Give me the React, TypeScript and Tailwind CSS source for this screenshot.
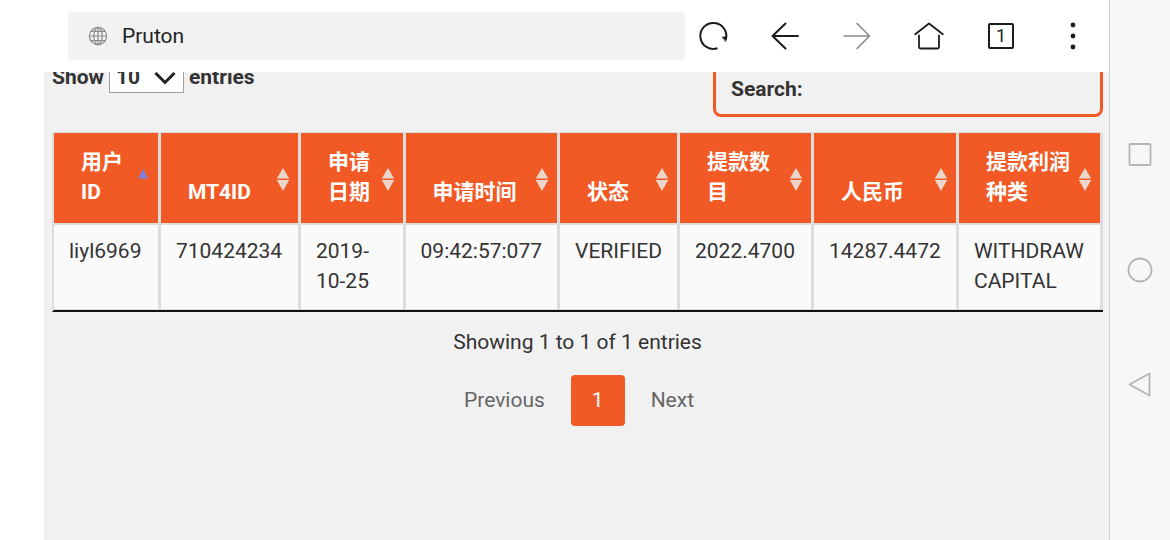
import { useState } from "react";
import type { ReactNode } from "react";

type SortState = "none" | "asc";

const COLUMNS: { label: string; width: string; sort: SortState }[] = [
  { label: "用户ID", width: "w-[107px]", sort: "asc" },
  { label: "MT4ID", width: "w-[140px]", sort: "none" },
  { label: "申请日期", width: "w-[105px]", sort: "none" },
  { label: "申请时间", width: "w-[154px]", sort: "none" },
  { label: "状态", width: "w-[120px]", sort: "none" },
  { label: "提款数目", width: "w-[134px]", sort: "none" },
  { label: "人民币", width: "w-[145px]", sort: "none" },
  { label: "提款利润种类", width: "w-[144px]", sort: "none" },
];

const ROWS = [
  [
    "liyl6969",
    "710424234",
    "2019-10-25",
    "09:42:57:077",
    "VERIFIED",
    "2022.4700",
    "14287.4472",
    "WITHDRAW CAPITAL",
  ],
];

/* ---------------- Browser bar ---------------- */

function BarButton({ label, children }: { label: string; children: ReactNode }) {
  return (
    <button
      type="button"
      aria-label={label}
      className="grid h-10 w-10 flex-shrink-0 place-items-center text-[#1c1c1c]"
    >
      {children}
    </button>
  );
}

function Icon({ children }: { children: ReactNode }) {
  return (
    <svg
      width="32"
      height="32"
      viewBox="0 0 32 32"
      fill="none"
      stroke="currentColor"
      strokeWidth="2"
      strokeLinecap="round"
      strokeLinejoin="round"
      aria-hidden="true"
    >
      {children}
    </svg>
  );
}

function BrowserBar() {
  return (
    <header className="flex h-[72px] items-center bg-white pl-[68px] pr-4">
      <label className="flex h-12 min-w-0 flex-1 items-center gap-3.5 rounded bg-[#f2f2f2] px-5">
        <svg
          width="20"
          height="20"
          viewBox="0 0 20 20"
          fill="none"
          stroke="#8c8c8c"
          strokeWidth="1.2"
          className="flex-shrink-0"
          aria-hidden="true"
        >
          <circle cx="10" cy="10" r="8.6" />
          <ellipse cx="10" cy="10" rx="4.2" ry="8.6" />
          <path d="M10 1.4v17.2M1.4 10h17.2M3 5.4h14M3 14.6h14" />
        </svg>
        <input
          type="text"
          aria-label="Address"
          defaultValue="Pruton"
          className="min-w-0 flex-1 bg-transparent leading-[30px] text-[#222] outline-none"
        />
      </label>

      <nav className="ml-2 flex gap-8">
        <BarButton label="Reload">
          <Icon>
            <path d="M20.5 28.2A13 13 0 1 1 28.8 19.5" strokeLinecap="butt" />
            <path d="M25.4 17.2L29.6 16.4L28.8 21.2Z" fill="currentColor" strokeWidth="0.6" />
          </Icon>
        </BarButton>
        <BarButton label="Back">
          <Icon>
            <path d="M29 16H3.5M16.5 3.5L3.5 16L16.5 28.5" />
          </Icon>
        </BarButton>
        <BarButton label="Forward">
          <span className="text-[#8c8c8c]">
            <Icon>
              <path d="M3 16h25.5M16 3.5L28.5 16L16 28.5" strokeWidth="1.6" />
            </Icon>
          </span>
        </BarButton>
        <BarButton label="Home">
          <Icon>
            <path d="M2.2 14.2L16 3.5L29.8 14.2" strokeWidth="1.8" />
            <path d="M6 15.5V27a1.5 1.5 0 0 0 1.5 1.5h17A1.5 1.5 0 0 0 26 27V15.5" strokeWidth="1.8" />
          </Icon>
        </BarButton>
        <BarButton label="Tabs">
          <span className="grid h-[26px] w-[26px] place-items-center rounded-xs border-2 border-[#1c1c1c] text-[18px] leading-none">
            1
          </span>
        </BarButton>
        <BarButton label="Menu">
          <svg width="6" height="28" viewBox="0 0 6 28" fill="currentColor" aria-hidden="true">
            <circle cx="3" cy="3" r="2.4" />
            <circle cx="3" cy="14" r="2.4" />
            <circle cx="3" cy="25" r="2.4" />
          </svg>
        </BarButton>
      </nav>
    </header>
  );
}

/* ---------------- Table controls ---------------- */

function TableControls() {
  const [query, setQuery] = useState("");

  return (
    <div className="flex items-start justify-between font-bold">
      <label className="flex h-8 items-center gap-[5px]">
        Show
        <span className="relative">
          <select
            defaultValue="10"
            className="block h-8 w-[75px] appearance-none border border-[#a0a0a0] bg-white pl-1.5 font-bold outline-none"
          >
            <option>10</option>
            <option>25</option>
            <option>50</option>
            <option>100</option>
          </select>
          <svg
            width="22"
            height="14"
            viewBox="0 0 22 14"
            fill="none"
            stroke="#222"
            strokeWidth="3"
            className="pointer-events-none absolute right-2 top-2.5"
            aria-hidden="true"
          >
            <path d="M1.5 2L11 11.5L20.5 2" />
          </svg>
        </span>
        entries
      </label>

      <label className="flex w-[390px] gap-2 rounded-lg border-3 border-[#ed5a26] px-[15px] py-2.5">
        Search:
        <input
          type="search"
          value={query}
          onChange={(e) => setQuery(e.target.value)}
          className="h-[30px] min-w-0 flex-1 bg-transparent font-normal outline-none"
        />
      </label>
    </div>
  );
}

/* ---------------- Table ---------------- */

function SortIcon({ sort }: { sort: SortState }) {
  return (
    <svg width="14" height="24" viewBox="0 0 14 24" className="flex-shrink-0 self-center" aria-hidden="true">
      {sort === "asc" ? (
        <path d="M7 2L12 11.5H2Z" fill="#8080e0" />
      ) : (
        <>
          <path d="M7 1L13.2 11.5H0.8Z" fill="#ecd6cc" />
          <path d="M7 24L13.2 13H0.8Z" fill="#ecd6cc" />
        </>
      )}
    </svg>
  );
}

function WithdrawTable() {
  return (
    <table className="w-full border-separate border-spacing-0 border-b-2 border-l-2 border-b-[#111] border-l-[#ddd] bg-[#fafafa]">
      <thead>
        <tr>
          {COLUMNS.map((c) => (
            <th
              key={c.label}
              aria-sort={c.sort === "asc" ? "ascending" : "none"}
              className={`${c.width} border-b-2 border-r-3 border-t border-[#ddd] bg-[#f15a25] p-0 text-left text-white`}
            >
              <button
                type="button"
                className="flex h-[90px] w-full items-end justify-between pl-[27px] pr-2 pt-0.5 text-left font-bold"
              >
                <span className="pb-4">{c.label}</span>
                <SortIcon sort={c.sort} />
              </button>
            </th>
          ))}
        </tr>
      </thead>
      <tbody>
        {ROWS.map((row) => (
          <tr key={row[0]}>
            {row.map((cell) => (
              <td
                key={cell}
                className="border-b border-r-3 border-[#ddd] px-[15px] pb-[13px] pt-[11px] align-top"
              >
                {cell}
              </td>
            ))}
          </tr>
        ))}
      </tbody>
    </table>
  );
}

function Pagination() {
  return (
    <nav aria-label="Pagination" className="mt-[18px] flex justify-center gap-[5px] pl-[3px]">
      <button type="button" className="h-[51px] px-[21px] pb-0.5 text-[#666]">
        Previous
      </button>
      <button
        type="button"
        aria-current="page"
        className="h-[51px] rounded-sm bg-[#f15a25] px-[21px] pb-0.5 text-white"
      >
        1
      </button>
      <button type="button" className="h-[51px] px-[21px] pb-0.5 text-[#666]">
        Next
      </button>
    </nav>
  );
}

/* ---------------- System navigation ---------------- */

function SystemNav() {
  return (
    <aside className="flex w-[61px] flex-shrink-0 flex-col items-center justify-center gap-[85px] border-l border-[#d4d4d4] bg-[#f7f7f7] text-[#b4b4b4]">
      <button type="button" aria-label="Recent apps">
        <svg width="30" height="30" viewBox="0 0 30 30" fill="none" stroke="currentColor" strokeWidth="1.8" className="block">
          <rect x="4.5" y="4" width="21" height="21" rx="1" />
        </svg>
      </button>
      <button type="button" aria-label="Home screen">
        <svg width="30" height="30" viewBox="0 0 30 30" fill="none" stroke="currentColor" strokeWidth="1.8" className="block">
          <circle cx="15" cy="15" r="11.5" />
        </svg>
      </button>
      <button type="button" aria-label="Go back">
        <svg width="30" height="30" viewBox="0 0 30 30" fill="none" stroke="currentColor" strokeWidth="1.8" strokeLinejoin="round" className="block">
          <path d="M4.5 14.5L24.500 3.500V25.500Z" />
        </svg>
      </button>
    </aside>
  );
}

export default function App() {
  return (
    <div className="flex min-h-screen bg-white font-['Roboto','Noto_Sans_CJK_SC',sans-serif] text-[21px] leading-[30px] text-[#333]">
      <div className="flex min-w-0 flex-1 flex-col">
        <BrowserBar />

        <main className="ml-11 flex-1 overflow-hidden bg-[#f1f1f1] pl-2 pr-1.5">
          {/* page is scrolled a little, so the controls slide under the bar */}
          <div className="-mt-[11px]">
            <TableControls />
            <div className="mt-[15px]">
              <WithdrawTable />
            </div>
            <p className="mt-[15px] text-center">Showing 1 to 1 of 1 entries</p>
            <Pagination />
          </div>
        </main>
      </div>

      <SystemNav />
    </div>
  );
}
